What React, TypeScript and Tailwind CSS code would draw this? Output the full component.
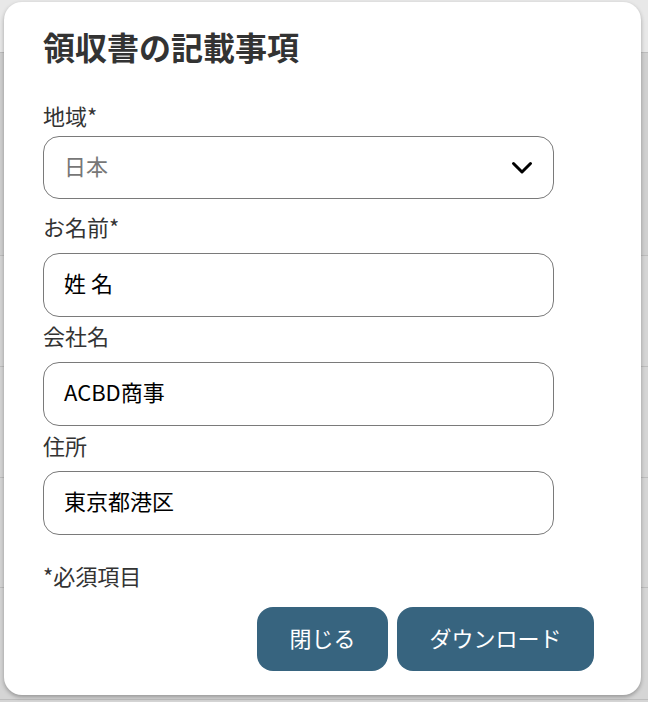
import React from "react"

const font = { fontFamily: '"Noto Sans CJK JP", "Noto Sans", sans-serif' }

function Field({
  label,
  value,
  labelClass,
  inputClass,
}: {
  label: string
  value: string
  labelClass: string
  inputClass: string
}) {
  return (
    <>
      <div className={`text-[22px] leading-[28px] text-[#333] ${labelClass}`}>{label}</div>
      <div
        className={`w-[511px] h-[64px] rounded-[16px] border border-[#7a7a7a] flex items-center pl-[20px] pb-[5px] text-[22px] text-black ${inputClass}`}
      >
        {value}
      </div>
    </>
  )
}

export default function App() {
  const rows = [52, 255, 366, 477, 587, 699]

  return (
    <div className="relative w-[648px] h-[702px] overflow-hidden bg-[#d5d5d5]" style={font}>
      {/* page behind the dialog */}
      <div className="h-[52px] bg-[#e8e8e8]" />
      <div className="h-[203px] bg-[#d0d0d0]" />
      {rows.map((y) => (
        <div key={y} className="absolute left-0 right-0 h-px bg-[#bdbdbd]" style={{ top: y }} />
      ))}

      {/* dialog */}
      <div className="absolute left-[4px] top-[2px] w-[637px] h-[693px] bg-white rounded-[18px] shadow-[0_2px_4px_rgba(0,0,0,0.3)] pl-[39px] pt-[24px] flex flex-col">
        <h1 className="text-[32px] leading-[40px] font-bold text-[#333]">領収書の記載事項</h1>

        <div className="mt-[35px] text-[22px] leading-[28px] text-[#333]">地域*</div>
        <div className="mt-[7px] w-[511px] h-[63px] rounded-[16px] border border-[#7a7a7a] flex items-center justify-between pl-[20px] pr-[20px] text-[22px] text-[#777]">
          <span className="pb-[5px]">日本</span>
          <svg width="22" height="14" viewBox="0 0 22 14" fill="none">
            <polyline points="2.5,2.5 11,11 19.5,2.5" stroke="#000" strokeWidth="3" strokeLinecap="round" strokeLinejoin="round" />
          </svg>
        </div>

        <Field label="お名前*" value="姓 名" labelClass="mt-[13px]" inputClass="mt-[13px]" />
        <Field label="会社名" value="ACBD商事" labelClass="mt-[4px]" inputClass="mt-[13px]" />
        <Field label="住所" value="東京都港区" labelClass="mt-[5px]" inputClass="mt-[12px]" />

        <div className="mt-[26px] text-[22px] leading-[28px] text-[#333]">*必須項目</div>

        <div className="mt-[18px] flex gap-[9px] pl-[214px]">
          <button className="w-[131px] h-[64px] rounded-[16px] bg-[#37647f] text-white text-[22px] pb-[4px]">閉じる</button>
          <button className="w-[197px] h-[64px] rounded-[16px] bg-[#37647f] text-white text-[22px] pb-[4px]">ダウンロード</button>
        </div>
      </div>
    </div>
  )
}
